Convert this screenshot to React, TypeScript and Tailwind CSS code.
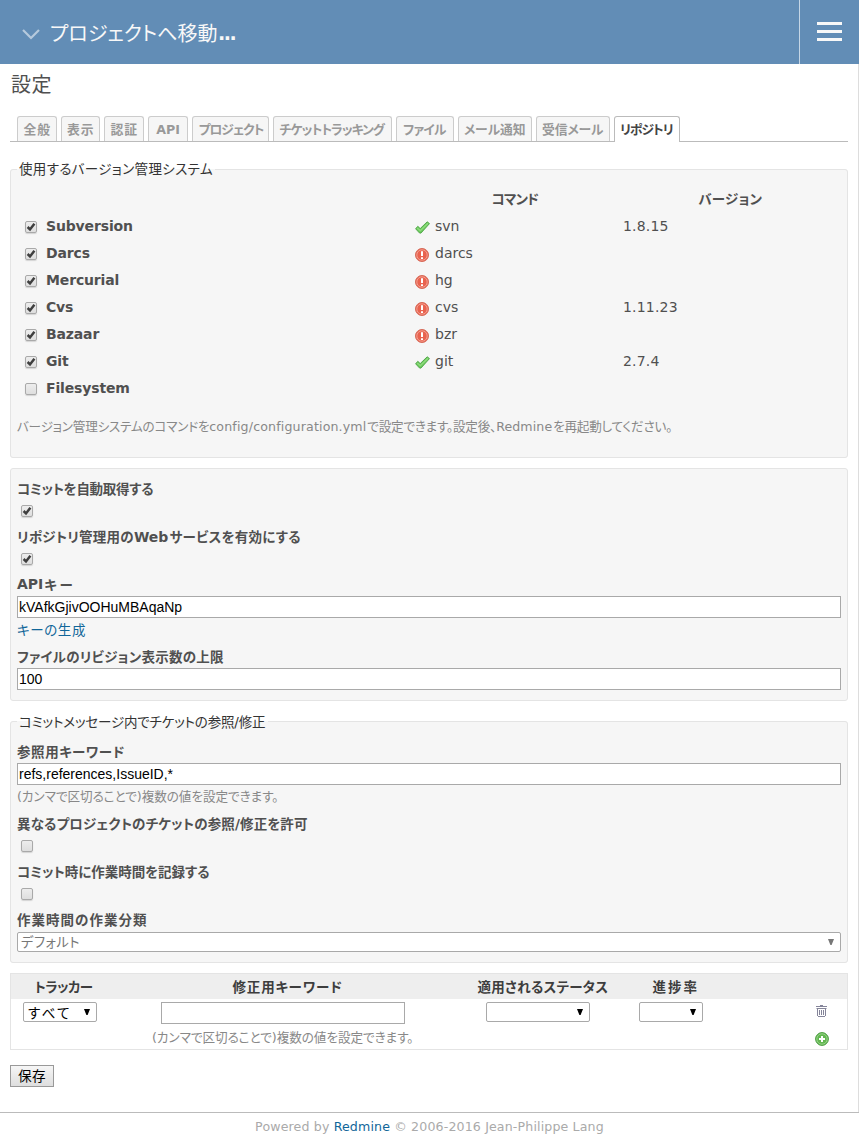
import type { ReactNode } from 'react';

const jp = "font-['DejaVu_Sans','Noto_Sans_CJK_JP',sans-serif] [font-feature-settings:'palt']";
const kana = "font-['Noto_Sans_CJK_JP',sans-serif]";

/* Japanese run set to a fixed measure, its characters spread evenly. */
function J({ w, children }: { w: string; children: ReactNode }) {
  return (
    <span className={`${kana} ${w} block shrink-0 pr-[1.5px] whitespace-nowrap tracking-[-1px] [text-align-last:justify]`}>
      {children}
    </span>
  );
}

function L({ children, className = '' }: { children: ReactNode; className?: string }) {
  return <span className={`font-['DejaVu_Sans',sans-serif] ${className}`}>{children}</span>;
}

function Box({ on }: { on?: boolean }) {
  return (
    <span className="flex h-[12px] w-[12px] shrink-0 rounded-[2px] border border-[#a9a9a9] bg-linear-to-b from-[#ededed] to-[#dedede] shadow-[0_1px_1px_#d4d4d4]">
      {on && (
        <svg viewBox="0 0 10 10" className="h-[10px] w-[10px]">
          <path d="M1.6 5 L4 7.4 L8.4 1.8" fill="none" stroke="#3f3f3f" strokeWidth="2.5" />
        </svg>
      )}
    </span>
  );
}

function Ok() {
  return (
    <svg viewBox="0 0 15 13" className="mt-[2px] h-[13px] w-[15px]">
      <path d="M0.6 7.8 L2.8 5.3 L5.2 7.6 L12.2 0.8 L14.5 2.6 L6 12.1 L4.6 12.1 Z" fill="#6cc95d" stroke="#3f9c38" strokeWidth="0.8" strokeLinejoin="round" />
      <path d="M2.2 7.1 L5.3 9.6 L13 2.2" fill="none" stroke="#8fdc7e" strokeWidth="1.3" />
    </svg>
  );
}

function Bad() {
  return (
    <svg viewBox="0 0 14 14" className="mt-[3px] h-[14px] w-[14px]">
      <circle cx="7" cy="7" r="6.5" fill="#e9634f" stroke="#d66a59" />
      <circle cx="7" cy="7" r="5.2" fill="none" stroke="#f4a597" strokeWidth="0.9" />
      <path d="M6 3.2h2v4.8H6zM6 9.2h2v1.7H6z" fill="#fff" />
    </svg>
  );
}

function Arrow({ gray }: { gray?: boolean }) {
  return (
    <svg viewBox="0 0 6 6" className="h-[6px] w-[6px] shrink-0">
      <path d="M0 0h6L3.6 6H2.4Z" fill={gray ? '#777' : '#000'} />
    </svg>
  );
}

const tabs = [
  { t: '全般', box: 'w-[40px]', w: 'w-[27px]' },
  { t: '表示', box: 'w-[39px]', w: 'w-[27px]' },
  { t: '認証', box: 'w-[40px]', w: 'w-[27px]' },
  { t: 'API', box: 'w-[40px]', w: '' },
  { t: 'プロジェクト', box: 'w-[77px]', w: 'w-[64px]' },
  { t: 'チケットトラッキング', box: 'w-[119px]', w: 'w-[106px]' },
  { t: 'ファイル', box: 'w-[58px]', w: 'w-[44px]' },
  { t: 'メール通知', box: 'w-[74px]', w: 'w-[62px]' },
  { t: '受信メール', box: 'w-[74px]', w: 'w-[62px]' },
];

const scms = [
  { n: 'Subversion', c: 'svn', v: '1.8.15', ok: true, on: true },
  { n: 'Darcs', c: 'darcs', v: '', ok: false, on: true },
  { n: 'Mercurial', c: 'hg', v: '', ok: false, on: true },
  { n: 'Cvs', c: 'cvs', v: '1.11.23', ok: false, on: true },
  { n: 'Bazaar', c: 'bzr', v: '', ok: false, on: true },
  { n: 'Git', c: 'git', v: '2.7.4', ok: true, on: true },
  { n: 'Filesystem', c: '', v: '', ok: false, on: false },
];

function Label({ w, pre, children }: { w: string; pre?: string; children: ReactNode }) {
  return (
    <div className="flex h-6 items-center text-[13.5px] leading-6 font-bold text-[#505050]">
      {pre && <L className="mr-px text-[14px]">{pre}</L>}
      <J w={w}>{children}</J>
    </div>
  );
}

function Check({ on }: { on?: boolean }) {
  return (
    <div className="flex h-6 items-start pt-[5px] pl-1">
      <Box on={on} />
    </div>
  );
}

function Field({ value }: { value: string }) {
  return (
    <div className="flex h-[22px] items-center border border-[#a9a9a9] bg-white pl-px font-['Liberation_Sans',sans-serif] text-[14px] text-black">
      {value}
    </div>
  );
}

const panel = 'rounded-[3px] border border-[#e4e4e4] bg-[#f6f6f6] px-[6px]';
const select = 'flex h-5 items-center justify-between rounded-[2px] border border-[#a9a9a9] bg-white';

export default function App() {
  return (
    <div className={`${jp} flex h-[1139px] w-[859px] flex-col overflow-hidden bg-white text-[14px] text-[#505050]`}>
      <header className="flex h-16 shrink-0 bg-[#628db6]">
        <div className="flex flex-1 items-center pt-px pl-[22px]">
          <svg viewBox="0 0 18 11" className="mt-[3px] mr-[10px] h-[11px] w-[18px]">
            <path d="M1 1 L9 9 L17 1" fill="none" stroke="#b6cadd" strokeWidth="2.2" />
          </svg>
          <div className="flex items-center text-[20px] leading-8 text-[#f8f8f8]">
            <J w="w-[168px]">プロジェクトへ移動</J>
            <L className="text-[19px] font-bold tracking-[-1.5px]">...</L>
          </div>
        </div>
        <div className="flex w-[60px] flex-col gap-[5px] border-l border-[#c5d6e6] pt-[22px] pl-[17px]">
          <div className="h-[3px] w-[25px] bg-[#f8f8f8]" />
          <div className="h-[3px] w-[25px] bg-[#f8f8f8]" />
          <div className="h-[3px] w-[25px] bg-[#f8f8f8]" />
        </div>
      </header>

      <main className="flex h-[1048px] shrink-0 flex-col border-r border-[#ddd] pr-[10px] pl-[10px]">
        <h2 className="flex h-[39px] items-center pl-px text-[20px] leading-[39px]">
          <J w="w-[41px]">設定</J>
        </h2>

        <nav className="mt-[13px] flex h-[26px] shrink-0 items-end gap-1 border-b border-[#bbb] pl-[7px] text-[12.8px] leading-6 font-bold text-[#999]">
          {tabs.map((t) => (
            <div key={t.t} className={`${t.box} flex h-[25px] justify-center rounded-t-[3px] border border-b-0 border-[#ccc] bg-[#f6f6f6]`}>
              {t.w ? <J w={t.w}>{t.t}</J> : <L className="pt-px text-[12.6px]">{t.t}</L>}
            </div>
          ))}
          <div className="-mb-px flex h-[26px] w-[66px] rounded-t-[3px] border border-b-0 border-[#bbb] bg-white pl-[5px] text-[#444]">
            <J w="w-[54px]">リポジトリ</J>
          </div>
        </nav>

        <fieldset className={`${panel} mt-[17px] h-[299px] shrink-0`}>
          <legend className="h-5 px-[2px] text-[13.5px] leading-[19px] text-[#333]">
            <J w="w-[194px]">使用するバージョン管理システム</J>
          </legend>
          <div className="mt-[6px] mb-px grid grid-cols-[394px_209px_1fr] text-[13.5px] leading-[27px] font-bold">
            <div />
            <div className="flex justify-center"><J w="w-[48px]">コマンド</J></div>
            <div className="flex justify-center"><J w="w-[64px]">バージョン</J></div>
          </div>
          {scms.map((s) => (
            <div key={s.n} className="grid h-[27px] grid-cols-[395px_208px_1fr] leading-[27px]">
              <div className="flex items-center pl-2">
                <span className="mt-px flex"><Box on={s.on} /></span>
                <b className="ml-[9px] tracking-[-0.15px]">{s.n}</b>
              </div>
              <div className="flex items-center gap-[5px] pl-[3px]">
                {s.c && <span className="flex w-[15px]">{s.ok ? <Ok /> : <Bad />}</span>}
                <span>{s.c}</span>
              </div>
              <div className="pl-[3px] tracking-[0.2px]">{s.v}</div>
            </div>
          ))}
          <div className="mt-[10px] text-[12.6px] leading-[27px] text-[#888]">
            <J w="w-[656px]">
              バージョン管理システムのコマンドを<L className="tracking-[0.15px]">config/configuration.yml</L>で設定できます。設定後、<L className="tracking-[0.1px]">Redmine</L>を再起動してください。
            </J>
          </div>
        </fieldset>

        <section className={`${panel} mt-[10px] h-[233px] shrink-0 pt-[7px]`}>
          <Label w="w-[137px]">コミットを自動取得する</Label>
          <Check on />
          <Label w="w-[284px]">リポジトリ管理用の<L className="text-[14px] tracking-normal">Web</L>サービスを有効にする</Label>
          <Check on />
          <Label w="w-[29px]" pre="API">キー</Label>
          <Field value="kVAfkGjivOOHuMBAqaNp" />
          <div className="mb-[3px] h-[23px] text-[13.5px] leading-[22px] text-[#169]"><J w="w-[69px]">キーの生成</J></div>
          <Label w="w-[207px]">ファイルのリビジョン表示数の上限</Label>
          <Field value="100" />
        </section>

        <fieldset className={`${panel} mt-[10px] h-[252px] shrink-0`}>
          <legend className="h-5 px-[2px] text-[13.5px] leading-5 text-[#333]">
            <J w="w-[247px]">コミットメッセージ内でチケットの参照<L>/</L>修正</J>
          </legend>
          <div className="mt-[8px]">
            <Label w="w-[108px]">参照用キーワード</Label>
            <Field value="refs,references,IssueID,*" />
            <div className="mb-[3px] h-[23px] text-[12.6px] leading-[22px] text-[#888]">
              <J w="w-[262px]"><L>(</L>カンマで区切ることで<L>)</L>複数の値を設定できます。</J>
            </div>
            <Label w="w-[291px]">異なるプロジェクトのチケットの参照<L>/</L>修正を許可</Label>
            <Check />
            <Label w="w-[193px]">コミット時に作業時間を記録する</Label>
            <Check />
            <Label w="w-[130px]">作業時間の作業分類</Label>
            <div className={`${select} mt-px pr-[6px] pl-[3px] text-[13.3px] leading-[18px] text-[#777]`}>
              <J w="w-[59px]">デフォルト</J>
              <Arrow gray />
            </div>
          </div>
        </fieldset>

        <div className="mt-[10px] h-[77px] shrink-0 border border-[#e4e4e4] text-black">
          <div className="grid h-[25px] grid-cols-[106px_341px_170px_94px_1fr] justify-items-center bg-[#eee] text-[13.5px] leading-[25px] font-bold text-[#3d3d3d]">
            <J w="w-[59px]">トラッカー</J>
            <J w="w-[110px]">修正用キーワード</J>
            <J w="w-[131px]">適用されるステータス</J>
            <J w="w-[45px]">進捗率</J>
          </div>
          <div className="grid grid-cols-[106px_332px_170px_109px_1fr] pt-[3px]">
            <div className="pl-3">
              <div className={`${select} w-[74px] pr-[6px] pl-[4px] text-[13.6px] leading-[18px]`}>
                <J w="w-[42px]">すべて</J>
                <Arrow />
              </div>
            </div>
            <div className="pl-[35px]">
              <div className="ml-[9px] h-[22px] w-[244px] border border-[#a9a9a9]" />
              <div className="mt-px h-6 text-[12.6px] leading-6 text-[#888]">
                <J w="w-[262px]"><L>(</L>カンマで区切ることで<L>)</L>複数の値を設定できます。</J>
              </div>
            </div>
            <div className="pl-[37px]">
              <div className={`${select} w-[104px] pr-[6px]`}><span /><Arrow /></div>
            </div>
            <div className="pl-[20px]">
              <div className={`${select} w-[64px] pr-[6px]`}><span /><Arrow /></div>
            </div>
            <div className="flex flex-col gap-[15px] pt-[3px] pl-[87px]">
              <svg viewBox="0 0 11 12" className="ml-px h-[12px] w-[11px]" fill="none" stroke="#85859a" strokeWidth="1">
                <path d="M0 1.5h11M1.5 3v8M9.5 3v8M0.5 3.5h10M2 11.5h7M3.5 5v5M5.5 5v5M7.5 5v5M4 0.5h3" />
              </svg>
              <svg viewBox="0 0 14 14" className="h-[14px] w-[14px]">
                <circle cx="7" cy="7" r="6.4" fill="#62b750" stroke="#4c9c42" />
                <circle cx="7" cy="7" r="5.2" fill="none" stroke="#9cd68e" strokeWidth="0.9" />
                <path d="M6 4h2v2h2v2H8v2H6V8H4V6h2z" fill="#fff" />
              </svg>
            </div>
          </div>
        </div>

        <button className="mt-[15px] flex h-[22px] w-[44px] shrink-0 items-center justify-center border border-[#999] bg-linear-to-b from-[#f6f6f6] to-[#dedede] pb-[2px] text-[13.6px] leading-[18px] text-black">
          <J w="w-[28px]">保存</J>
        </button>
      </main>

      <footer className="flex h-[27px] justify-center border-t border-[#bbb] text-[12.6px] leading-[27px] tracking-[0.14px] text-[#aaa]">
        <span>Powered by <span className="text-[#169]">Redmine</span> © 2006-2016 Jean-Philippe Lang</span>
      </footer>
    </div>
  );
}
